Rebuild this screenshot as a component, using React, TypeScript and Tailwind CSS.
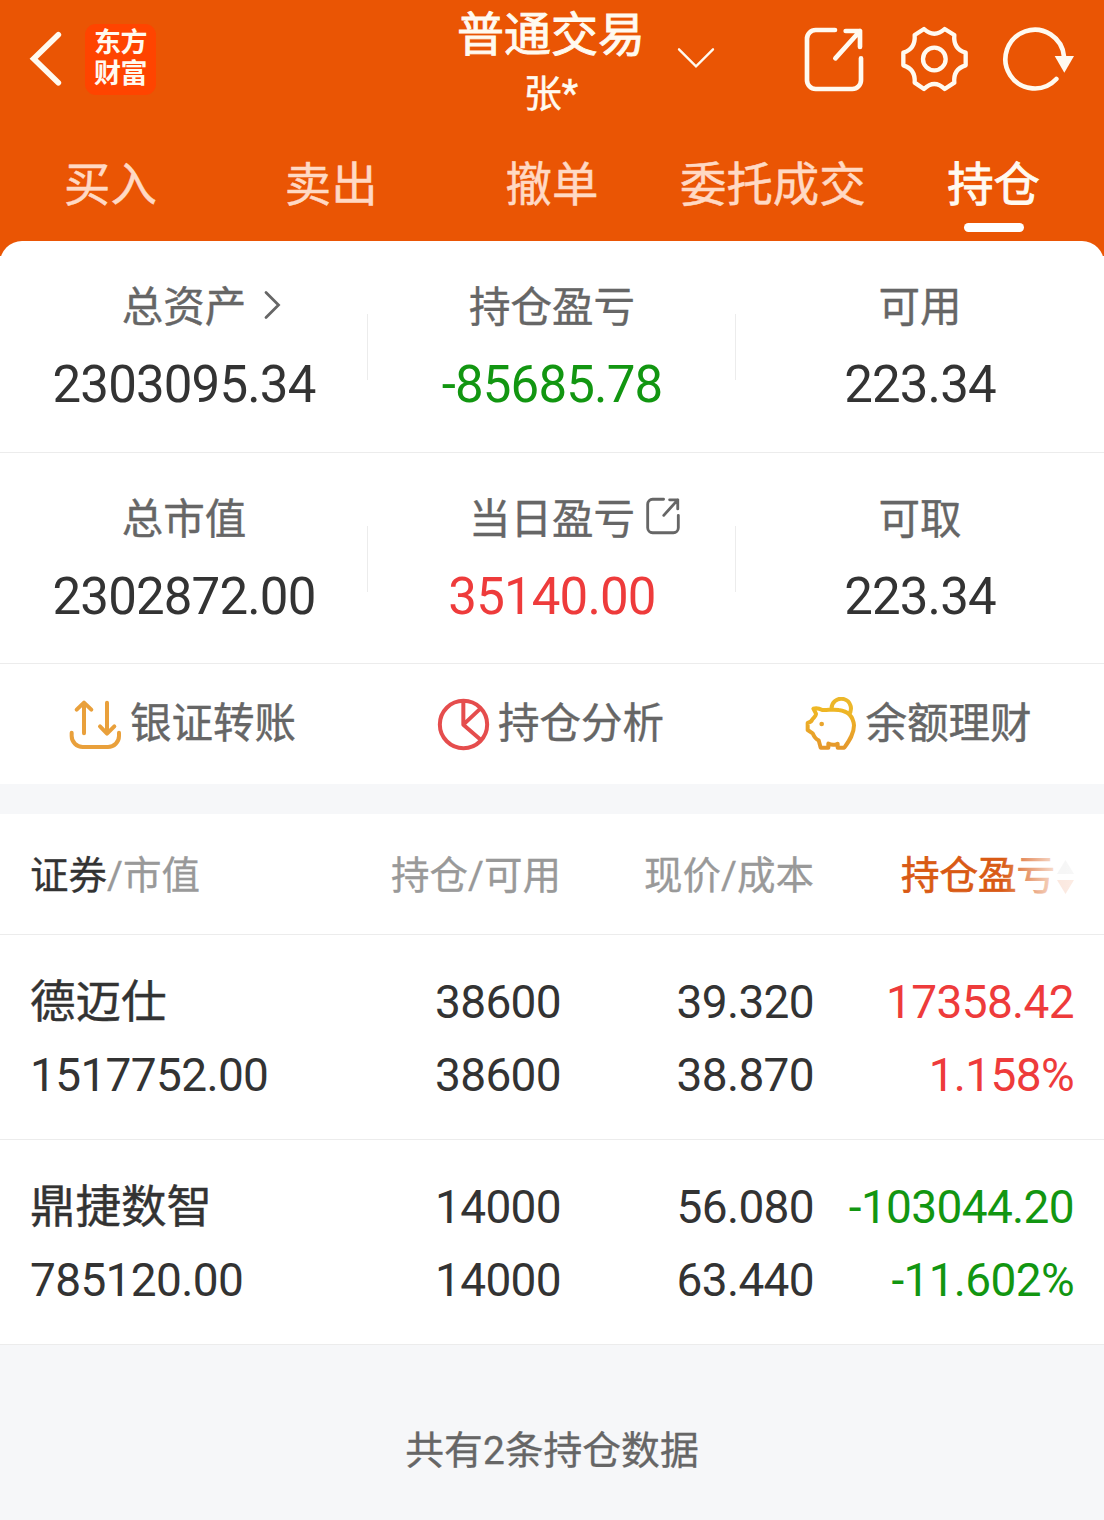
import type { ReactNode } from "react";

const FONT = "font-['Roboto','Noto_Sans_CJK_SC',sans-serif]";

function BackIcon() {
  return (
    <svg className="mt-[31px] h-[55px] w-[33px]" viewBox="87 93 99 165" fill="none" stroke="#fffaf0" strokeWidth="17" strokeLinecap="round" strokeLinejoin="miter">
      <path d="M175 104 101 176l74 72" />
    </svg>
  );
}

function ShareIcon({ className, strokeWidth }: { className: string; strokeWidth: number }) {
  return (
    <svg className={className} viewBox="69 78 186 201" fill="none" stroke="currentColor" strokeWidth={strokeWidth} strokeLinecap="round" strokeLinejoin="round">
      <path d="M165 90H107a26 26 0 0 0-26 26V241a26 26 0 0 0 26 26H217a26 26 0 0 0 26-26V175" />
      <path d="M197 93H240V141M240 93 166 175" />
    </svg>
  );
}

function GearIcon() {
  return (
    <svg className="ml-[35px] mt-6 size-[70px]" viewBox="360 72 210 210" fill="none" stroke="#fffaf0" strokeWidth="13" strokeLinejoin="round">
      <path d="M432 87Q463 115 494 87L523 105Q519 147 557 158V196Q519 207 523 248L494 267Q463 237 432 267L404 248Q407 207 370 196V158Q407 147 404 105Z" />
      <circle cx="463" cy="177" r="34" />
    </svg>
  );
}

function RefreshIcon() {
  return (
    <svg className="ml-[30px] mt-[25px] h-[67px] w-[75px]" viewBox="660 75 225 201" fill="none" stroke="#fffaf0" strokeWidth="14" strokeLinecap="round">
      <path d="M852 170A88 88 0 1 0 829 237" />
      <path d="M824 168H882L853 218Z" fill="#fffaf0" stroke="none" />
    </svg>
  );
}

function TransferIcon() {
  return (
    <svg className="h-[51px] w-[53px]" viewBox="87 51 159 153" fill="none" stroke="#e9a03b" strokeWidth="12" strokeLinecap="round" strokeLinejoin="round">
      <path d="M132 154V62M110 83 132 62 154 83M201 62V154M180 133 201 155 223 133" />
      <path d="M95 152V162A33 33 0 0 0 128 195H204A33 33 0 0 0 237 162V152" />
    </svg>
  );
}

function PieIcon() {
  return (
    <svg className="size-[53px]" viewBox="51 51 159 159" fill="none" stroke="#e54d4d" strokeWidth="12" strokeLinejoin="round">
      <circle cx="130.5" cy="130.5" r="71" />
      <path d="M130 60V131L182 176M130 131 181 83" />
    </svg>
  );
}

function PiggyIcon() {
  return (
    <svg className="h-[54px] w-[52px]" viewBox="75 50 156 162" fill="none" strokeWidth="12" strokeLinejoin="round">
      <defs>
        <linearGradient id="gold" x1="0" y1="0" x2="0" y2="1">
          <stop offset="0" stopColor="#efb824" />
          <stop offset="1" stopColor="#e5982c" />
        </linearGradient>
      </defs>
      <path stroke="url(#gold)" d="M100 85Q112 81 127 89C143 90 160 86 176 89Q218 94 222 135C222 160 209 180 193 202H173V190Q160 197 145 190V202H122L116 180Q105 176 98 159L83 149V128Q95 124 97 117Q109 105 108 100Z" />
      <path stroke="#ecb72a" d="M155 88A29 29 0 1 1 206 103" />
      <circle cx="125" cy="131" r="7" fill="#e9a52e" />
    </svg>
  );
}

const tabs = ["买入", "卖出", "撤单", "委托成交", "持仓"];

function Header() {
  return (
    <header className="h-[256px] bg-[#ea5504] text-[#fffaf0]">
      <div className="grid h-[130px] grid-cols-[457px_188px_1fr]">
        <div className="flex items-start pl-[29px]">
          <BackIcon />
          <div className="ml-[23px] mt-6 flex size-[71px] flex-col items-center justify-center rounded-[11px] bg-[#ff4400] pb-0.5 text-[27px] leading-[31px] font-bold tracking-[-0.5px]">
            <span>东方</span>
            <span>财富</span>
          </div>
        </div>
        <div className="flex flex-col items-center whitespace-nowrap [-webkit-text-stroke:0.9px_currentColor]">
          <h1 className="mt-0.5 h-[66px] text-[47px] leading-[66px]">普通交易</h1>
          <p className="h-[52px] text-[38px] leading-[52px] [-webkit-text-stroke:0.5px_currentColor]">张*</p>
        </div>
        <div className="flex items-start">
          <svg className="ml-8 mt-[47px] h-[21px] w-[38px]" viewBox="711 141 114 63" fill="none" stroke="#fffaf0" strokeWidth="7" strokeLinecap="round">
            <path d="M717 148 768 199 819 148" />
          </svg>
          <ShareIcon className="ml-[88px] mt-[26px] h-[67px] w-[62px]" strokeWidth={14} />
          <GearIcon />
          <RefreshIcon />
        </div>
      </div>
      <nav className="grid grid-cols-5 [-webkit-text-stroke:0.5px_currentColor]">
        {tabs.map((t, i) => (
          <div key={t} className={i === 4 ? "flex flex-col items-center text-[#fffaf0] [-webkit-text-stroke:0.9px_currentColor]" : "flex flex-col items-center text-[#ffd9c4]"}>
            <span className="mt-[22px] h-[66px] text-[46.4px] leading-[66px] whitespace-nowrap">{t}</span>
            {i === 4 && <span className="mt-[5px] h-[9px] w-[60px] rounded-full bg-white" />}
          </div>
        ))}
      </nav>
    </header>
  );
}

function Stat({ label, value, color, icon, divider }: { label: string; value: string; color: string; icon?: ReactNode; divider: boolean }) {
  return (
    <div className="relative flex flex-col items-center pt-[38px]">
      <div className="relative h-14 text-[41.5px] leading-[57px] text-[#666] [-webkit-text-stroke:0.4px_currentColor]">
        {label}
        {icon}
      </div>
      <div className={`mt-[20px] h-[60px] text-[51px] leading-[60px] tracking-[-0.85px] ${color}`}>{value}</div>
      {divider && <span className="absolute top-[73px] right-0 h-[66px] w-px bg-[#ececec]" />}
    </div>
  );
}

function Stats() {
  return (
    <>
      <section className="grid h-[212px] grid-cols-3 border-b border-[#ececec]">
        <Stat
          label="总资产"
          value="2303095.34"
          color="text-[#333]"
          divider
          icon={
            <svg className="absolute top-[11px] left-[141px] h-[30px] w-[18px]" viewBox="0 0 18 30" fill="none" stroke="#666" strokeWidth="2.8" strokeLinecap="round">
              <path d="M3 2.5 15.5 15 3 27.5" />
            </svg>
          }
        />
        <Stat label="持仓盈亏" value="-85685.78" color="text-[#129611]" divider />
        <Stat label="可用" value="223.34" color="text-[#333]" divider={false} />
      </section>
      <section className="grid h-[211px] grid-cols-3 border-b border-[#ececec]">
        <Stat label="总市值" value="2302872.00" color="text-[#333]" divider />
        <Stat
          label="当日盈亏"
          value="35140.00"
          color="text-[#ee3b3b]"
          divider
          icon={<ShareIcon className="absolute top-[6px] left-[175px] h-[38px] w-[38px]" strokeWidth={15} />}
        />
        <Stat label="可取" value="223.34" color="text-[#333]" divider={false} />
      </section>
    </>
  );
}

const actions = [
  { icon: <TransferIcon />, label: "银证转账" },
  { icon: <PieIcon />, label: "持仓分析" },
  { icon: <PiggyIcon />, label: "余额理财" },
];

const rows = [
  { name: "德迈仕", worth: "1517752.00", hold: "38600", usable: "38600", price: "39.320", cost: "38.870", profit: "17358.42", rate: "1.158%", color: "text-[#ee3b3b]" },
  { name: "鼎捷数智", worth: "785120.00", hold: "14000", usable: "14000", price: "56.080", cost: "63.440", profit: "-103044.20", rate: "-11.602%", color: "text-[#129611]" },
];

function Holdings() {
  return (
    <section>
      <div className="grid h-[121px] grid-cols-[300px_231px_253px_260px] border-b border-[#ececec] px-[30px] text-[38.5px] leading-[123px] whitespace-nowrap text-[#999] [-webkit-text-stroke:0.3px_currentColor]">
        <div>
          <span className="text-[#333]">证券</span>/市值
        </div>
        <div className="text-right">持仓/可用</div>
        <div className="text-right">现价/成本</div>
        <div className="relative flex justify-end text-[#d95a14]">
          <span className="[-webkit-text-stroke:0.7px_currentColor]">持仓盈亏</span>
          <svg className="mt-[45px] ml-0.5 h-9 w-[17px]" viewBox="0 0 17 36">
            <path d="M0 15H17L8.5 1Z" fill="#d8d8d8" />
            <path d="M0 21H17L8.5 35Z" fill="#ef9f78" />
          </svg>
          <span className="absolute top-8 right-0 h-[60px] w-[72px] bg-linear-to-r from-white/0 via-white/75 via-70% to-white/80" />
        </div>
      </div>
      {rows.map((r) => (
        <div key={r.name} className="grid h-[205px] grid-cols-[300px_231px_253px_260px] border-b border-[#ececec] px-[30px] pt-[31px] text-[46px] leading-[73px] tracking-[-0.65px] whitespace-nowrap text-[#333]">
          <div>
            <div className="text-[45.5px] tracking-normal [-webkit-text-stroke:0.4px_currentColor]">{r.name}</div>
            <div>{r.worth}</div>
          </div>
          <div className="text-right">
            <div>{r.hold}</div>
            <div>{r.usable}</div>
          </div>
          <div className="text-right">
            <div>{r.price}</div>
            <div>{r.cost}</div>
          </div>
          <div className={`text-right ${r.color}`}>
            <div>{r.profit}</div>
            <div>{r.rate}</div>
          </div>
        </div>
      ))}
    </section>
  );
}

export default function App() {
  return (
    <div lang="zh-CN" className={`flex h-[1520px] w-[1104px] flex-col overflow-hidden bg-white ${FONT}`}>
      <Header />
      <main className="relative -mt-[15px] flex flex-1 flex-col rounded-t-[22px] bg-white">
        <Stats />
        <section className="grid h-[120px] grid-cols-3">
          {actions.map((a) => (
            <div key={a.label} className="flex items-center justify-center gap-2 pr-[3px] text-[41.5px] text-[#666] [-webkit-text-stroke:0.4px_currentColor]">
              {a.icon}
              <span className="leading-[56px]">{a.label}</span>
            </div>
          ))}
        </section>
        <div className="h-[30px] bg-[#f6f7f9]" />
        <Holdings />
        <footer className="flex-1 bg-[#f6f7f9] pt-[78px] text-center text-[38.8px] leading-[56px] text-[#666] [-webkit-text-stroke:0.3px_currentColor]">共有2条持仓数据</footer>
      </main>
    </div>
  );
}
